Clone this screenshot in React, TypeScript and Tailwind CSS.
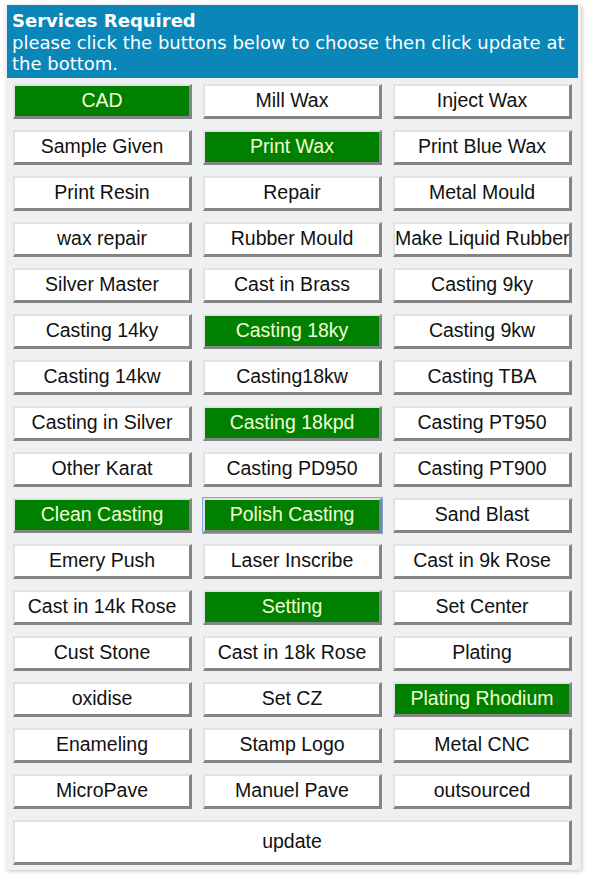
import { useState } from "react"

const SERVICES = [
  "CAD", "Mill Wax", "Inject Wax",
  "Sample Given", "Print Wax", "Print Blue Wax",
  "Print Resin", "Repair", "Metal Mould",
  "wax repair", "Rubber Mould", "Make Liquid Rubber",
  "Silver Master", "Cast in Brass", "Casting 9ky",
  "Casting 14ky", "Casting 18ky", "Casting 9kw",
  "Casting 14kw", "Casting18kw", "Casting TBA",
  "Casting in Silver", "Casting 18kpd", "Casting PT950",
  "Other Karat", "Casting PD950", "Casting PT900",
  "Clean Casting", "Polish Casting", "Sand Blast",
  "Emery Push", "Laser Inscribe", "Cast in 9k Rose",
  "Cast in 14k Rose", "Setting", "Set Center",
  "Cust Stone", "Cast in 18k Rose", "Plating",
  "oxidise", "Set CZ", "Plating Rhodium",
  "Enameling", "Stamp Logo", "Metal CNC",
  "MicroPave", "Manuel Pave", "outsourced",
]

const INITIAL = ["CAD", "Print Wax", "Casting 18ky", "Casting 18kpd", "Clean Casting", "Polish Casting", "Setting", "Plating Rhodium"]

export default function App() {
  const [selected, setSelected] = useState<string[]>(INITIAL)
  const focused = "Polish Casting"

  const toggle = (s: string) =>
    setSelected(cur => (cur.includes(s) ? cur.filter(x => x !== s) : [...cur, s]))

  return (
    <div className="min-h-[880px] bg-white pt-[4px] pl-[6px] font-['Liberation_Sans',Arial,sans-serif]">
      <div className="w-[575px] bg-[#eef0f2] pb-[5px] shadow-[1px_1px_4px_rgba(0,0,0,0.25)]">
        {/* header */}
        <div className="ml-[1px] mr-[3px] mt-[1px] bg-[#0a87b8] px-[5px] pt-[5px] pb-[3px] font-['DejaVu_Sans',Verdana,sans-serif] text-[18px] leading-[21.5px] text-white">
          <div className="font-bold">Services Required</div>
          <div>please click the buttons below to choose then click update at the bottom.</div>
        </div>

        {/* buttons */}
        <div className="mt-[6px] grid grid-cols-3 gap-x-[11px] gap-y-[11px] pl-[7px] pr-[9px]">
          {SERVICES.map(s => {
            const on = selected.includes(s)
            return (
              <button
                key={s}
                onClick={() => toggle(s)}
                className={
                  "h-[35px] overflow-hidden whitespace-nowrap border-t-2 border-l-2 border-r-[3px] border-b-[3px] border-t-[#e2e2e2] border-l-[#e2e2e2] border-r-[#848484] border-b-[#848484] px-0 text-center font-['Liberation_Sans',Arial,sans-serif] text-[19.5px] leading-none " +
                  (on ? "bg-[#008000] text-[#f2ffd2]" : "bg-white text-[#111]") +
                  (s === focused ? " outline outline-1 outline-[#7fa6e6]" : "")
                }
              >
                {s}
              </button>
            )
          })}
        </div>

        <div className="mt-[11px] pl-[7px] pr-[9px]">
          <button className="h-[45px] w-full border-t-2 border-l-2 border-r-[3px] border-b-[3px] border-t-[#e2e2e2] border-l-[#e2e2e2] border-r-[#848484] border-b-[#848484] bg-white text-center font-['Liberation_Sans',Arial,sans-serif] text-[19.5px] text-[#111]">
            update
          </button>
        </div>
      </div>
    </div>
  )
}
